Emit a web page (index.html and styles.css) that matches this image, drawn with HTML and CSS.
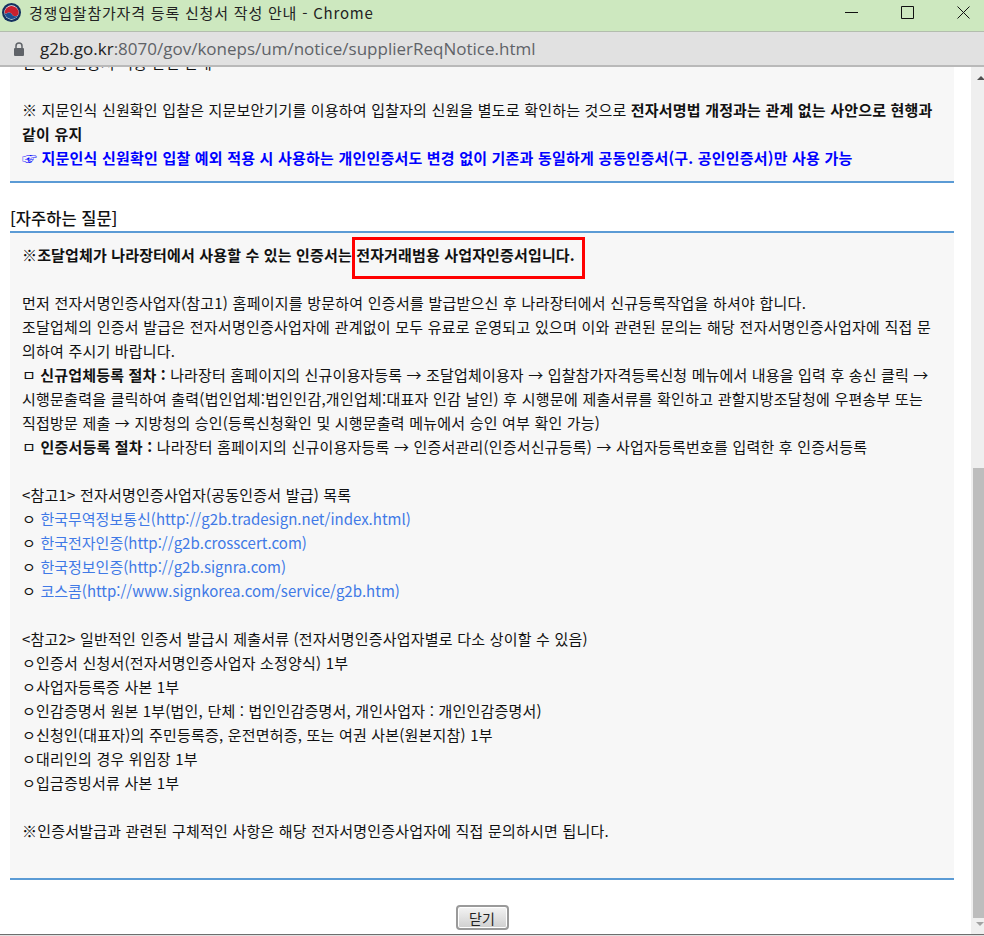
FILE: index.html
```html
<!DOCTYPE html>
<html lang="ko">
<head>
<meta charset="utf-8">
<title>경쟁입찰참가자격 등록 신청서 작성 안내</title>
<link rel="stylesheet" href="styles.css">
</head>
<body>
<header class="titlebar">
  <svg class="favicon" viewBox="0 0 20 20"><circle cx="10" cy="10" r="10" fill="#14315f"/><circle cx="10" cy="10" r="7.6" fill="#f4f6f2"/><path d="M2.6 10.6a7.5 7.5 0 0 1 14.9-1.2c.2 3-1.6 4.6-3.7 4.6-2.400 0-3-2-4.300-3.200-1.300-1-3.300-1-4.600.2-.8.600-1.500.500-2.300-.400z" fill="#c9202f"/><path d="M2.600 10.600c.8.900 1.500 1 2.300.400 1.300-1.200 3.300-1.200 4.600-.2 1.300 1.200 1.900 3.200 4.300 3.200 1.300 0 2.500-.6 3.100-1.700A7.500 7.500 0 0 1 2.600 10.600z" fill="#1d4f91"/></svg>
  <span class="title">경쟁입찰참가자격 등록 신청서 작성 안내 - Chrome</span>
  <div class="winbtns">
    <svg class="winbtn" viewBox="0 0 13 13"><path d="M0 6.500h13" stroke="#111" fill="none"/></svg>
    <svg class="winbtn" viewBox="0 0 13 13"><path d="M.5.500h12v12H.5z" stroke="#111" fill="none"/></svg>
    <svg class="winbtn" viewBox="0 0 13 13"><path d="M.5.500l12 12M12.500.500l-12 12" stroke="#111" fill="none"/></svg>
  </div>
</header>
<div class="urlbar">
  <svg class="lock" viewBox="0 0 12 14"><path d="M3 6V4a3 3 0 0 1 6 0v2" fill="none" stroke="#5f6368" stroke-width="1.500"/><rect x="1" y="6" width="10" height="8" rx="1" fill="#5f6368"/></svg>
  <span class="url"><span class="host">g2b.go.kr</span>:8070/gov/koneps/um/notice/supplierReqNotice.html</span>
</div>
<div class="viewport">
  <main class="page">
    <section class="panel panel-top">
      <div class="clipline"><p>전 공동 인증서 적용 관련 안내</p></div>
      <p class="gap narrow-1">※ 지문인식 신원확인 입찰은 지문보안기기를 이용하여 입찰자의 신원을 별도로 확인하는 것으로 <b>전자서명법 개정과는 관계 없는 사안으로 현행과</b></p>
      <p><b>같이 유지</b></p>
      <p class="notice"><b>☞ 지문인식 신원확인 입찰 예외 적용 시 사용하는 개인인증서도 변경 없이 기존과 동일하게 공동인증서(구. 공인인증서)만 사용 가능</b></p>
    </section>
    <h2 class="heading">[자주하는 질문]</h2>
    <section class="panel panel-main">
      <p class="lead"><b>※조달업체가 나라장터에서 사용할 수 있는 인증서는 <span class="boxed">전자거래범용 사업자인증서입니다.</span></b></p>
      <p class="gap wide">먼저 전자서명인증사업자(참고1) 홈페이지를 방문하여 인증서를 발급받으신 후 나라장터에서 신규등록작업을 하셔야 합니다.</p>
      <p class="wide">조달업체의 인증서 발급은 전자서명인증사업자에 관계없이 모두 유료로 운영되고 있으며 이와 관련된 문의는 해당 전자서명인증사업자에 직접 문</p>
      <p>의하여 주시기 바랍니다.</p>
      <p class="narrow">ㅁ <b>신규업체등록 절차 :</b> 나라장터 홈페이지의 신규이용자등록 → 조달업체이용자 → 입찰참가자격등록신청 메뉴에서 내용을 입력 후 송신 클릭 →</p>
      <p class="wide">시행문출력을 클릭하여 출력(법인업체:법인인감,개인업체:대표자 인감 날인) 후 시행문에 제출서류를 확인하고 관할지방조달청에 우편송부 또는</p>
      <p>직접방문 제출 → 지방청의 승인(등록신청확인 및 시행문출력 메뉴에서 승인 여부 확인 가능)</p>
      <p>ㅁ <b>인증서등록 절차 :</b> 나라장터 홈페이지의 신규이용자등록 → 인증서관리(인증서신규등록) → 사업자등록번호를 입력한 후 인증서등록</p>
      <p class="gap">&lt;참고1&gt; 전자서명인증사업자(공동인증서 발급) 목록</p>
      <p>ㅇ <a href="#">한국무역정보통신(http://g2b.tradesign.net/index.html)</a></p>
      <p>ㅇ <a href="#">한국전자인증(http://g2b.crosscert.com)</a></p>
      <p>ㅇ <a href="#">한국정보인증(http://g2b.signra.com)</a></p>
      <p>ㅇ <a href="#">코스콤(http://www.signkorea.com/service/g2b.htm)</a></p>
      <p class="gap">&lt;참고2&gt; 일반적인 인증서 발급시 제출서류 (전자서명인증사업자별로 다소 상이할 수 있음)</p>
      <p>ㅇ인증서 신청서(전자서명인증사업자 소정양식) 1부</p>
      <p>ㅇ사업자등록증 사본 1부</p>
      <p>ㅇ인감증명서 원본 1부(법인, 단체 : 법인인감증명서, 개인사업자 : 개인인감증명서)</p>
      <p>ㅇ신청인(대표자)의 주민등록증, 운전면허증, 또는 여권 사본(원본지참) 1부</p>
      <p>ㅇ대리인의 경우 위임장 1부</p>
      <p>ㅇ입금증빙서류 사본 1부</p>
      <p class="gap">※인증서발급과 관련된 구체적인 사항은 해당 전자서명인증사업자에 직접 문의하시면 됩니다.</p>
    </section>
    <div class="actions"><button class="close" type="button">닫기</button></div>
  </main>
  <aside class="scrollbar">
    <span class="arrow arrow-up"></span>
    <span class="track"><span class="thumb"></span></span>
    <span class="arrow arrow-down"></span>
  </aside>
</div>
</body>
</html>
```
FILE: styles.css
```css
* { box-sizing: border-box; }
html, body { margin: 0; height: 936px; overflow: hidden; background: #e0e0e0; }
body { font-family: "Noto Sans CJK KR", "Noto Sans", sans-serif; color: #111; display: flex; flex-direction: column; }
p { margin: 0; }

.titlebar { height: 32px; flex: none; background: #cde8bf; border-bottom: 1px solid #b3bdae; display: flex; align-items: center; padding: 0 0 6px 2px; }
.favicon { width: 19px; height: 19px; margin-right: 8px; }
.title { font-size: 15px; color: #222; letter-spacing: .8px; }
.winbtns { margin-left: auto; display: flex; gap: 43px; padding-right: 14px; }
.winbtn { width: 13px; height: 13px; display: block; }

.urlbar { height: 35px; flex: none; background: #e1e1e1; border-bottom: 2px solid #b9b9b9; display: flex; align-items: center; padding-left: 13px; }
.lock { width: 12px; height: 14px; margin-right: 15px; }
.url { font-family: "Open Sans", "Noto Sans", sans-serif; font-size: 17px; color: #5f6368; }
.host { color: #222; }

.viewport { flex: 1; min-height: 0; display: flex; overflow: hidden; border-bottom: 1px solid #6e6e6e; margin-bottom: 1px; }
.page { flex: 1; min-width: 0; padding: 0 17px 0 10px; background: #fff; font-size: 15px; letter-spacing: .2px; line-height: 24px; white-space: nowrap; }

.panel { background: #f7f7f7; padding-left: 12px; }
.panel-top { border-bottom: 2px solid #5b9bd5; height: 116px; }
.clipline { height: 7px; overflow: hidden; display: flex; align-items: flex-end; }
.clipline p { line-height: 24px; flex: none; transform: translateY(1px); }
.gap { margin-top: 24px; }
.notice { color: #0000ff; }
b { font-weight: 700; }
.lead { letter-spacing: .15px; }
.wide { letter-spacing: .24px; }
.narrow { letter-spacing: .16px; }
.narrow-1 { letter-spacing: .185px; }

.heading { margin: 24px 0 0; height: 24px; font-size: 16.5px; line-height: 22px; font-weight: 500; color: #111; letter-spacing: 0; }
.panel-main { border-top: 2px solid #5b9bd5; border-bottom: 2px solid #5b9bd5; height: 649px; padding-top: 10px; }
.boxed { position: relative; }
.boxed::after { content: ""; position: absolute; left: -4px; right: -10px; top: -7px; bottom: -14px; border: 3px solid #f00; }
a { color: #4079e6; text-decoration: none; letter-spacing: 0; }

.actions { display: flex; justify-content: center; margin-top: 25px; }
.close { width: 53px; height: 25px; padding: 0; font: 14px "Noto Sans CJK KR", sans-serif; color: #222; border: 2px solid #9a9a9a; border-radius: 4px; background: linear-gradient(#f4f4f4, #cfcfcf); box-shadow: inset 0 0 0 1px #fff; }

.scrollbar { width: 13px; flex: none; background: #efefef; display: flex; flex-direction: column; align-items: stretch; }
.arrow { height: 13px; flex: none; position: relative; }
.arrow::after { content: ""; position: absolute; left: 6px; border: 4px solid transparent; }
.arrow-up::after { top: 9px; border-bottom-color: #505050; border-top: 0; }
.arrow-down::after { top: 1px; left: 5px; border-top-color: #a3a3a3; border-bottom: 0; }
.track { flex: 1; display: flex; flex-direction: column; justify-content: flex-end; padding: 0 0 3px 2px; }
.thumb { height: 450px; background: #bdbdbd; }
```
